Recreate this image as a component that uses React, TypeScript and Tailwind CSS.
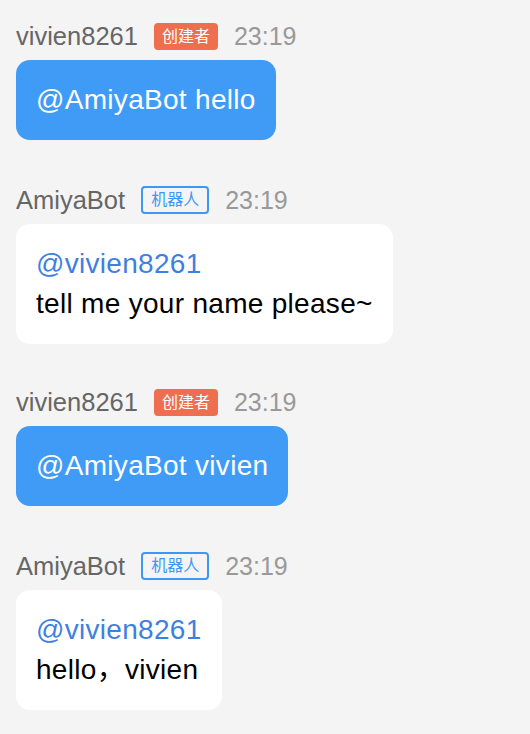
import React from "react";

const font = { fontFamily: '"Liberation Sans", "Noto Sans CJK SC", sans-serif' };

function Header({ name, role }: { name: string; role: "owner" | "bot" }) {
  return (
    <div className="flex items-center h-[36px]">
      <span className="text-[25.5px] leading-[36px] text-[#666666] mr-[16px]">{name}</span>
      {role === "owner" ? (
        <span className="h-[27px] px-[8px] rounded-[4px] bg-[#ee6f4f] text-white text-[16px] leading-[27px] mr-[16px]">
          创建者
        </span>
      ) : (
        <span className="h-[28px] px-[8px] rounded-[4px] border-2 border-[#3f97f5] text-[#3f97f5] text-[16px] leading-[24px] mr-[16px]">
          机器人
        </span>
      )}
      <span className="text-[25px] leading-[36px] text-[#999999]">23:19</span>
    </div>
  );
}

function Block({ children, className = "" }: { children: React.ReactNode; className?: string }) {
  return <div className={"flex flex-col gap-[6px] " + className}>{children}</div>;
}

export default function App() {
  return (
    <div className="w-[530px] h-[734px] bg-[#f4f4f4] px-4 pt-[18px] flex flex-col" style={font}>
      <Block>
        <Header name="vivien8261" role="owner" />
        <div className="self-start rounded-[14px] bg-[#409bf7] text-white text-[28px] leading-[40px] tracking-[0.3px] p-5">
          @AmiyaBot hello
        </div>
      </Block>
      <Block className="mt-[42px]">
        <Header name="AmiyaBot" role="bot" />
        <div className="self-start rounded-[14px] bg-white text-black text-[28px] leading-[40px] tracking-[0.3px] p-5">
          <div className="text-[#3f7fe0]">@vivien8261</div>
          <div>tell me your name please~</div>
        </div>
      </Block>
      <Block className="mt-[40px]">
        <Header name="vivien8261" role="owner" />
        <div className="self-start rounded-[14px] bg-[#409bf7] text-white text-[28px] leading-[40px] tracking-[0.3px] p-5">
          @AmiyaBot vivien
        </div>
      </Block>
      <Block className="mt-[42px]">
        <Header name="AmiyaBot" role="bot" />
        <div className="self-start rounded-[14px] bg-white text-black text-[28px] leading-[40px] tracking-[0.3px] p-5">
          <div className="text-[#3f7fe0]">@vivien8261</div>
          <div>hello，vivien</div>
        </div>
      </Block>
    </div>
  );
}
